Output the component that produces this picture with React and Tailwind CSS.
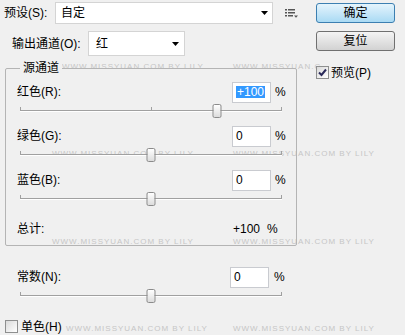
const marks = [
  { top: 63, left: 62, text: "WWW.MISSYUAN.COM BY LILY" },
  { top: 63, left: 233, text: "WWW.MISSYUAN.C" },
  { top: 150, left: 52, text: "WWW.MISSYUAN.COM BY LILY" },
  { top: 150, left: 233, text: "WWW.MISSYUAN.COM BY LILY" },
  { top: 238, left: 52, text: "WWW.MISSYUAN.COM BY LILY" },
  { top: 238, left: 233, text: "WWW.MISSYUAN.COM BY LILY" },
  { top: 325, left: 66, text: "WWW.MISSYUAN.COM BY LILY" },
  { top: 325, left: 233, text: "WWW.MISSYUAN.COM BY LILY" },
];

function Slider({ value, className = "" }) {
  const pct = ((value + 200) / 400) * 100;
  return (
    <div className={`relative h-[16px] w-[262px] ${className}`}>
      <div className="absolute left-0 right-0 top-[7px] h-[2px] border-t border-b border-t-[#a0a0a0] border-b-white" />
      <div className="absolute left-0 top-[4px] h-[4px] w-px bg-[#a0a0a0]" />
      <div className="absolute left-1/2 top-[4px] h-[4px] w-px bg-[#a0a0a0]" />
      <div className="absolute right-0 top-[4px] h-[4px] w-px bg-[#a0a0a0]" />
      <div
        className="absolute top-[1px] h-[14px] w-[9px] -translate-x-1/2 rounded-[2px] border border-[#8b8b8b] bg-linear-to-b from-white to-[#dcdcdc]"
        style={{ left: `${pct}%` }}
      />
    </div>
  );
}

function NumberBox({ children }) {
  return (
    <div className="flex h-[21px] w-[39px] items-center border border-[#c9cbd0] bg-white pl-[3px]">{children}</div>
  );
}

function Channel({ label, value, selected }) {
  return (
    <div>
      <div className="flex h-[22px] items-center">
        <div className="w-[226px] pl-[11px]">{label}</div>
        <NumberBox>
          {selected ? <span className="bg-[#3399ff] px-px text-white">{value}</span> : <span>{value}</span>}
        </NumberBox>
        <span className="ml-[4px]">%</span>
      </div>
      <Slider value={selected ? 100 : 0} className="ml-[14px]" />
    </div>
  );
}

function Check({ checked }) {
  return (
    <div className="grid h-[13px] w-[13px] place-items-center border border-[#8e8f8f] bg-linear-to-br from-[#dadada] to-white">
      {checked && (
        <svg width="9" height="9" viewBox="0 0 9 9">
          <path d="M1 4.5 L3.5 7 L8 1.5" fill="none" stroke="#2a2a5a" strokeWidth="2" />
        </svg>
      )}
    </div>
  );
}

function Arrow() {
  return (
    <svg width="7" height="4" viewBox="0 0 7 4">
      <path d="M0 0 H7 L3.5 4 Z" fill="#000" />
    </svg>
  );
}

export default function App() {
  return (
    <div className="relative flex h-[335px] w-[405px] overflow-hidden bg-[#f0f0f0] font-['Liberation_Sans','Noto_Sans_CJK_SC',sans-serif] text-[12px] leading-none text-black">
      {marks.map((m, i) => (
        <span
          key={i}
          className="absolute font-['Liberation_Sans',sans-serif] text-[8px] tracking-[1px] text-[#c6c6c6]"
          style={{ top: m.top, left: m.left }}
        >
          {m.text}
        </span>
      ))}

      <div className="relative w-[316px]">
        <div className="mt-[2px] flex h-[22px] items-center">
          <div className="w-[55px] pl-[4px]">预设(S):</div>
          <div className="flex h-[22px] w-[218px] items-center justify-between border border-[#d4d4d4] bg-white pl-[5px] pr-[4px]">
            <span>自定</span>
            <Arrow />
          </div>
          <svg className="ml-[12px]" width="13" height="9" viewBox="0 0 13 9">
            <g fill="#555">
              <rect x="0" y="0" width="2" height="1.5" />
              <rect x="3" y="0" width="7" height="1.5" />
              <rect x="0" y="3" width="2" height="1.5" />
              <rect x="3" y="3" width="7" height="1.5" />
              <rect x="0" y="6" width="2" height="1.5" />
              <rect x="3" y="6" width="5" height="1.5" />
              <path d="M9 6.5 H13 L11 8.8 Z" />
            </g>
          </svg>
        </div>

        <div className="mt-[7px] flex h-[25px] items-center">
          <div className="w-[88px] pl-[12px]">输出通道(O):</div>
          <div className="flex h-[25px] w-[97px] items-center justify-between border border-[#d4d4d4] bg-white pl-[7px] pr-[5px]">
            <span>红</span>
            <Arrow />
          </div>
        </div>

        <div className="relative ml-[5px] mt-[12px] h-[178px] w-[292px] rounded-[2px] border border-[#b4b4b4] pt-[12px]">
          <span className="absolute -top-[7px] left-[14px] bg-[#f0f0f0] px-[3px]">源通道</span>
          <Channel label="红色(R):" value="+100" selected />
          <div className="mt-[6px]">
            <Channel label="绿色(G):" value="0" />
          </div>
          <div className="mt-[6px]">
            <Channel label="蓝色(B):" value="0" />
          </div>
          <div className="mt-[11px] flex h-[22px] items-center">
            <div className="w-[227px] pl-[11px]">总计:</div>
            <span>+100</span>
            <span className="ml-[7px]">%</span>
          </div>
        </div>

        <div className="mt-[20px] flex h-[22px] items-center">
          <div className="w-[230px] pl-[17px]">常数(N):</div>
          <NumberBox>0</NumberBox>
          <span className="ml-[5px]">%</span>
        </div>
        <Slider value={0} className="ml-[20px]" />

        <div className="ml-[5px] mt-[16px] flex items-center gap-[3px]">
          <Check />
          <span>单色(H)</span>
        </div>
      </div>

      <div className="relative w-[80px] pt-[3px]">
        <div className="flex h-[20px] w-[79px] items-center justify-center rounded-[3px] border border-[#3c7fb1] bg-linear-to-b from-[#e5f4fc] to-[#a9daf4]">
          确定
        </div>
        <div className="mt-[8px] flex h-[20px] w-[79px] items-center justify-center rounded-[3px] border border-[#707070] bg-linear-to-b from-[#f4f4f4] to-[#d2d2d2]">
          复位
        </div>
        <div className="mt-[15px] flex items-center gap-[2px]">
          <Check checked />
          <span>预览(P)</span>
        </div>
      </div>
    </div>
  );
}
